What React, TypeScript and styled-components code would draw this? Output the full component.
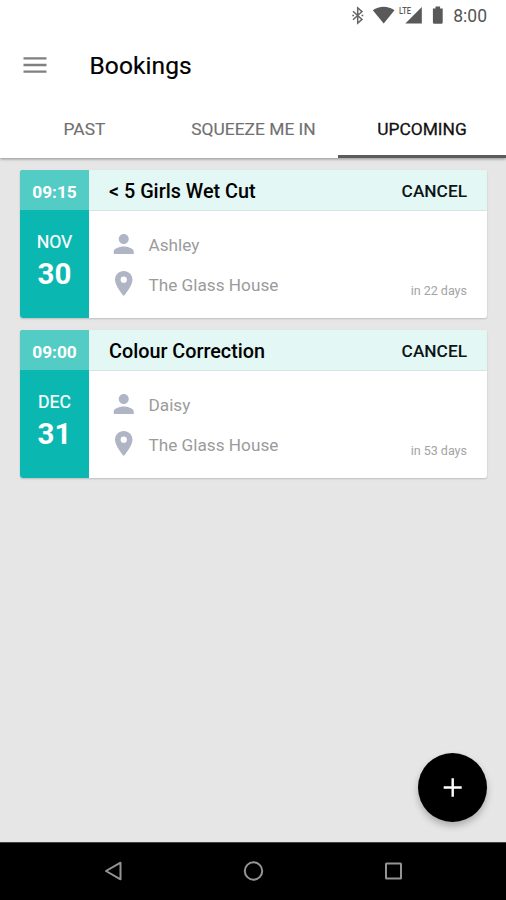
import React from "react";
import styled, { createGlobalStyle } from "styled-components";

const GlobalStyle = createGlobalStyle`
  * { box-sizing: border-box; }
  body { margin: 0; background: #e6e6e6; }
  button { border: 0; padding: 0; background: none; font: inherit; color: inherit; cursor: pointer; }
  svg { display: block; flex: none; }
`;

const Screen = styled.div`
  position: relative;
  display: flex;
  flex-direction: column;
  width: 506px;
  height: 900px;
  overflow: hidden;
  background: #e6e6e6;
  color: #000;
  font-family: Roboto, "Liberation Sans", sans-serif;
`;

const Header = styled.header`
  flex: none;
  height: 158px;
  background: #fff;
  box-shadow: 0 1px 3px rgba(0, 0, 0, 0.38);
`;

const StatusBar = styled.div`
  display: flex;
  justify-content: flex-end;
  height: 32px;
  padding-right: 19px;
`;

const Clock = styled.span`
  margin-left: 8px;
  font-size: 17.5px;
  line-height: 32px;
  color: #555;
`;

const AppBar = styled.div`
  display: flex;
  align-items: center;
  height: 68px;
  padding-left: 23px;
`;

const MenuButton = styled.button`
  width: 24px;
  height: 18px;
  margin-top: -3px;
`;

const Title = styled.h1`
  margin: 0 0 0 42.5px;
  font-size: 24.5px;
  line-height: 30px;
  font-weight: 400;
  letter-spacing: 0.1px;
  -webkit-text-stroke: 0.2px #000;
`;

const Tabs = styled.nav`
  display: grid;
  grid-template-columns: 169px 169px 168px;
  height: 58px;
`;

const Tab = styled.button<{ $active?: boolean }>`
  padding-top: 3px;
  border-bottom: 3px solid ${(p) => (p.$active ? "#5c5c5c" : "transparent")};
  font-size: 17.4px;
  line-height: 20px;
  color: ${(p) => (p.$active ? "#111" : "#707070")};
  -webkit-text-stroke: ${(p) => (p.$active ? "0.3px" : "0.15px")} currentColor;
`;

const BookingList = styled.main`
  display: flex;
  flex: 1;
  flex-direction: column;
  gap: 12px;
  padding: 12px 19px 0 20px;
`;

const Card = styled.article`
  display: grid;
  grid-template-columns: 69px 1fr;
  height: 148px;
  overflow: hidden;
  border-radius: 3px;
  background: #fff;
  box-shadow: 0 1px 2px rgba(0, 0, 0, 0.18);
`;

const DateColumn = styled.div`
  display: flex;
  flex-direction: column;
  align-items: center;
  background: #0ab8b1;
  color: #fff;
`;

const Time = styled.div`
  align-self: stretch;
  height: 40px;
  margin-bottom: 21px;
  background: #53ccc5;
  font-size: 17.3px;
  line-height: 45px;
  font-weight: 700;
  text-align: center;
`;

const Month = styled.div`
  font-size: 17.6px;
  line-height: 22px;
  -webkit-text-stroke: 0.2px #fff;
`;

const Day = styled.div`
  margin-top: 4px;
  font-size: 29.5px;
  line-height: 34px;
  font-weight: 700;
`;

const CardHeading = styled.div`
  display: flex;
  align-items: flex-start;
  justify-content: space-between;
  height: 41px;
  padding: 9px 20px 0;
  border-bottom: 1px solid #d5e5e2;
  background: #e3f7f4;
`;

const Service = styled.h2`
  margin: 0;
  font-size: 19.8px;
  line-height: 25px;
  font-weight: 500;
`;

const CancelButton = styled.button`
  margin-top: 1px;
  font-size: 17.3px;
  font-weight: 500;
  line-height: 22px;
  color: #0d1514;
`;

const CardBody = styled.div`
  display: flex;
  justify-content: space-between;
  height: 107px;
  padding: 13px 20px 0;
`;

const Detail = styled.div`
  display: flex;
  align-items: center;
  gap: 9.5px;
  height: 40px;
  font-size: 17.2px;
  color: #9b9b9b;
`;

const DetailText = styled.span`
  padding-top: 2px;
  line-height: 20px;
`;

const Remaining = styled.div`
  margin-top: 58px;
  font-size: 12.5px;
  line-height: 18px;
  color: #a3a3a3;
`;

const AddButton = styled.button`
  position: absolute;
  right: 19px;
  bottom: 78px;
  display: grid;
  place-items: center;
  width: 69px;
  height: 69px;
  border-radius: 50%;
  background: #000;
  box-shadow: 0 4px 7px rgba(0, 0, 0, 0.25);
`;

const SystemNav = styled.footer`
  display: flex;
  flex: none;
  align-items: center;
  justify-content: center;
  gap: 116px;
  height: 58px;
  padding-bottom: 2px;
  border-top: 1px solid #444;
  background: #000;
`;

const NavButton = styled.button`
  width: 24px;
  height: 24px;
`;

const StatusIcons = () => (
  <svg width="94" height="32" viewBox="351.5 0 94 32" fill="#595959">
    <path d="M353.5 11.2l9 8.2-4.3 3.8V7.8l4.3 3.8-9 8.2" fill="none" stroke="#666" strokeWidth="1.5" />
    <path d="M352.8 15.5h1.7M362 15.5h1.8" stroke="#666" strokeWidth="1.5" />
    <path d="M373.3 10.3c6.3-4.9 15.4-4.9 21.7 0L384.2 23.5z" />
    <path d="M422.3 7v16.5h-16.5z" />
    <text x="399.5" y="14.2" fontSize="9.5" fontWeight="500" textLength="12" lengthAdjust="spacingAndGlyphs">LTE</text>
    <path d="M436 6.5h4.6v2h2.6v13.8q0 1.5-1.4 1.5h-7q-1.4 0-1.4-1.5V8.5h2.6z" />
  </svg>
);

const MenuIcon = () => (
  <svg width="24" height="18" viewBox="0 0 24 18">
    <path d="M.5 2.3h23M.5 9h23M.5 15.7h23" stroke="#808080" strokeWidth="2.3" />
  </svg>
);

const PersonIcon = () => (
  <svg width="30" height="30" viewBox="0.2 0 24 24" fill="#b0b5c5">
    <path d="M12 12c2.21 0 4-1.79 4-4s-1.79-4-4-4-4 1.79-4 4 1.79 4 4 4zm0 2c-2.67 0-8 1.34-8 4v2h16v-2c0-2.66-5.33-4-8-4z" />
  </svg>
);

const PlaceIcon = () => (
  <svg width="30" height="30" viewBox="0.2 0.5 24 24" fill="#b0b5c5">
    <path d="M12 2C8.13 2 5 5.13 5 9c0 5.25 7 13 7 13s7-7.75 7-13c0-3.87-3.13-7-7-7zm0 9.5a2.5 2.5 0 0 1 0-5 2.5 2.5 0 0 1 0 5z" />
  </svg>
);

const bookings = [
  { time: "09:15", month: "NOV", day: "30", service: "< 5 Girls Wet Cut", person: "Ashley", place: "The Glass House", remaining: "in 22 days" },
  { time: "09:00", month: "DEC", day: "31", service: "Colour Correction", person: "Daisy", place: "The Glass House", remaining: "in 53 days" },
];

const BookingCard = ({ booking }: { booking: (typeof bookings)[number] }) => (
  <Card>
    <DateColumn>
      <Time>{booking.time}</Time>
      <Month>{booking.month}</Month>
      <Day>{booking.day}</Day>
    </DateColumn>
    <div>
      <CardHeading>
        <Service>{booking.service}</Service>
        <CancelButton>CANCEL</CancelButton>
      </CardHeading>
      <CardBody>
        <div>
          <Detail><PersonIcon /><DetailText>{booking.person}</DetailText></Detail>
          <Detail><PlaceIcon /><DetailText>{booking.place}</DetailText></Detail>
        </div>
        <Remaining>{booking.remaining}</Remaining>
      </CardBody>
    </div>
  </Card>
);

export default function App() {
  return (
    <>
      <GlobalStyle />
      <Screen>
        <Header>
          <StatusBar>
            <StatusIcons />
            <Clock>8:00</Clock>
          </StatusBar>
          <AppBar>
            <MenuButton aria-label="Menu"><MenuIcon /></MenuButton>
            <Title>Bookings</Title>
          </AppBar>
          <Tabs>
            <Tab>PAST</Tab>
            <Tab>SQUEEZE ME IN</Tab>
            <Tab $active>UPCOMING</Tab>
          </Tabs>
        </Header>
        <BookingList>
          {bookings.map((b) => <BookingCard key={b.time} booking={b} />)}
        </BookingList>
        <AddButton aria-label="Add booking">
          <svg width="20" height="20" viewBox="0 0 20 20">
            <path d="M9.7 .3v18.4M.7 9.5h18" stroke="#fff" strokeWidth="2.4" />
          </svg>
        </AddButton>
        <SystemNav>
          <NavButton aria-label="Back">
            <svg width="24" height="24" viewBox="0 0 24 24" fill="none" stroke="#949494" strokeWidth="2">
              <path d="M5 12l14.5-8.3v16.6z" strokeLinejoin="round" />
            </svg>
          </NavButton>
          <NavButton aria-label="Home">
            <svg width="24" height="24" viewBox="0 0 24 24" fill="none" stroke="#949494" strokeWidth="2">
              <circle cx="12.5" cy="12" r="8.7" />
            </svg>
          </NavButton>
          <NavButton aria-label="Recent apps">
            <svg width="24" height="24" viewBox="0 0 24 24" fill="none" stroke="#949494" strokeWidth="2">
              <rect x="5" y="4.5" width="15" height="15" rx=".5" />
            </svg>
          </NavButton>
        </SystemNav>
      </Screen>
    </>
  );
}
